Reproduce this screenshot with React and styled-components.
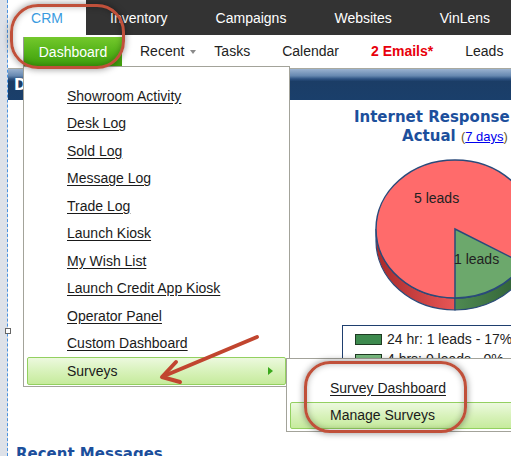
import React from 'react';
import styled, { createGlobalStyle } from 'styled-components';

const GlobalStyle = createGlobalStyle`
  html, body {
    margin: 0;
    padding: 0;
    background: #fff;
    font-family: "Liberation Sans", Arial, sans-serif;
    overflow: hidden;
  }
`;

const Page = styled.div`
  position: relative;
  display: flex;
  width: 511px;
  height: 456px;
  overflow: hidden;
  background: #fff;
`;

const LeftStrip = styled.div`
  flex: none;
  width: 7px;
  background: #dde1e8;
  border-right: 1px dashed #4b93e0;
`;

const Main = styled.div`
  flex: 1;
  min-width: 0;
  display: flex;
  flex-direction: column;
`;

const TopNav = styled.div`
  flex: none;
  display: flex;
  height: 35px;
  background: #333;
`;

const TopItem = styled.div`
  display: flex;
  align-items: center;
  justify-content: center;
  padding: ${p => (p.$active ? '0' : '0 24px')};
  width: ${p => (p.$active ? '78px' : 'auto')};
  flex: none;
  background: ${p => (p.$active ? '#fff' : 'transparent')};
  color: ${p => (p.$active ? '#3b9be0' : '#fff')};
  font-size: 14px;
  white-space: nowrap;
`;

const SubNav = styled.div`
  flex: none;
  display: flex;
  align-items: center;
  height: 31px;
  padding-left: 15px;
  background: #fff;
  white-space: nowrap;
`;

const DashButton = styled.div`
  align-self: flex-start;
  flex: none;
  display: flex;
  align-items: center;
  justify-content: center;
  box-sizing: border-box;
  width: 99px;
  height: 29px;
  margin: 2px 2px 0 0;
  border-left: 1px solid #999;
  background: linear-gradient(#74c82c, #56b41a 50%, #3f9f0c);
  color: #fff;
  font-size: 14px;
`;

const SubItem = styled.div`
  flex: none;
  display: flex;
  align-items: center;
  padding: ${p => (p.$menu ? '0 2px 0 16px' : '0 16px')};
  font-size: 14px;
  color: ${p => (p.$alert ? '#e8000b' : '#222')};
  font-weight: ${p => (p.$alert ? 'bold' : 'normal')};
`;

const Caret = styled.span`
  display: inline-block;
  margin-left: 6px;
  margin-top: 2px;
  border-left: 3.5px solid transparent;
  border-right: 3.5px solid transparent;
  border-top: 4px solid #8a8a8a;
`;

const Content = styled.div`
  flex: none;
  display: flex;
  flex-direction: column;
`;

const HeaderBar = styled.div`
  display: flex;
  align-items: center;
  height: 31px;
  margin-top: 2px;
  padding-left: 6px;
  border-top: 1px solid #a9a99f;
  background: linear-gradient(#9ab2d0 0%, #6688b0 22%, #2d5282 32%, #1b3d66 40%, #1a3f6b 100%);
  color: #fff;
  font-family: "DejaVu Sans", Verdana, sans-serif;
  font-weight: bold;
  font-size: 15px;
`;

const ChartRow = styled.div`
  display: flex;
  height: 345px;
`;

const LeftCol = styled.div`
  flex: none;
  width: 282px;
`;

const ChartCol = styled.div`
  flex: none;
  width: 330px;
  display: flex;
  flex-direction: column;
  align-items: center;
`;

const ChartTitle = styled.div`
  margin-top: 8px;
  text-align: center;
  font-family: "DejaVu Sans", Verdana, sans-serif;
  font-weight: bold;
  font-size: 15px;
  line-height: 19px;
  color: #1c4f9c;
  white-space: nowrap;
`;

const Paren = styled.span`
  font-family: "Liberation Sans", Arial, sans-serif;
  font-weight: normal;
  font-size: 13px;
  color: #6b5a2a;
`;

const DaysLink = styled.a`
  color: #0000ee;
  text-decoration: underline;
`;

const PieSvg = styled.svg`
  display: block;
  margin-top: 12px;
`;

const Legend = styled.div`
  box-sizing: border-box;
  width: 226px;
  margin-top: 11px;
  padding: 3px 0 4px 12px;
  border: 1px solid #1f3f6f;
`;

const LegendRow = styled.div`
  display: flex;
  align-items: center;
  gap: 5px;
  height: 20px;
  font-size: 14px;
  color: #222;
  white-space: nowrap;
`;

const Swatch = styled.span`
  flex: none;
  width: 25px;
  height: 9px;
  border: 1px solid #1e3b22;
  background: ${p => p.$color};
`;

const SectionTitle = styled.div`
  padding-left: 8px;
  font-family: "DejaVu Sans", Verdana, sans-serif;
  font-weight: bold;
  font-size: 15px;
  line-height: 18px;
  color: #1c4f9c;
`;

const Menu = styled.div`
  position: absolute;
  left: ${p => p.$x}px;
  top: ${p => p.$y}px;
  width: ${p => p.$w}px;
  height: ${p => p.$h}px;
  box-sizing: border-box;
  padding-top: 15px;
  border: 1px solid #a3a39a;
  background: #fff;
`;

const MenuItem = styled.div`
  display: flex;
  align-items: center;
  box-sizing: border-box;
  height: 27.5px;
  font-size: 14px;
  color: #1a1a1a;
  white-space: nowrap;
  padding-left: ${p => (p.$hot ? '39px' : '43px')};
  margin: ${p => (p.$hot ? '0 3px' : '0')};
  text-decoration: ${p => (p.$hot ? 'none' : 'underline')};
  text-underline-offset: 2px;
  border: ${p => (p.$hot ? '1px solid #93d060' : 'none')};
  border-radius: 2px;
  background: ${p => (p.$hot ? 'linear-gradient(#ecf9de, #d8f2bb 50%, #c6eb9c)' : 'transparent')};
`;

const SubArrow = styled.span`
  margin-left: auto;
  margin-right: 12px;
  border-top: 4px solid transparent;
  border-bottom: 4px solid transparent;
  border-left: 5px solid #3aa81c;
`;

const Ring = styled.div`
  position: absolute;
  left: ${p => p.$x}px;
  top: ${p => p.$y}px;
  width: ${p => p.$w}px;
  height: ${p => p.$h}px;
  box-sizing: border-box;
  border: 3px solid #c0503a;
  border-radius: ${p => p.$r}px;
  box-shadow: 0 0 6px 1px rgba(0, 0, 0, 0.35), inset 0 0 6px rgba(0, 0, 0, 0.3);
  pointer-events: none;
`;

const Overlay = styled.svg`
  position: absolute;
  left: 0;
  top: 0;
  pointer-events: none;
`;

const Handle = styled.div`
  position: absolute;
  left: 5px;
  top: 328px;
  width: 4px;
  height: 4px;
  border: 1px solid #666;
  background: #fff;
`;

const menuItems = [
  'Showroom Activity',
  'Desk Log',
  'Sold Log',
  'Message Log',
  'Trade Log',
  'Launch Kiosk',
  'My Wish List',
  'Launch Credit App Kiosk',
  'Operator Panel',
  'Custom Dashboard',
];

const legend = [
  { color: '#3d8a4e', label: '24 hr: 1 leads - 17%' },
  { color: '#79bb80', label: '4 hrs: 0 leads - 0%' },
  { color: '#b6dcb0', label: '1 hr: 0 leads - 0%' },
  { color: '#ff6b6b', label: 'Over 24 hr: 5 leads - 83%' },
];

// pie geometry (top face ellipse + visible side)
const cx = 85, cy = 71, rx = 79, ry = 69, depth = 12;
const pt = deg => {
  const a = (deg * Math.PI) / 180;
  return [+(cx + rx * Math.sin(a)).toFixed(2), +(cy - ry * Math.cos(a)).toFixed(2)];
};
const side = (a1, a2) => {
  const [x1, y1] = pt(a1);
  const [x2, y2] = pt(a2);
  return `M${x1},${y1} A${rx},${ry} 0 0 1 ${x2},${y2} L${x2},${y2 + depth} A${rx},${ry} 0 0 0 ${x1},${y1 + depth} Z`;
};

function Pie() {
  const [gx, gy] = pt(120);
  const [bx, by] = pt(180);
  return (
    <PieSvg width="170" height="156" viewBox="0 0 170 156">
      <defs>
        <linearGradient id="redSide" x1="0" x2="1">
          <stop offset="0" stopColor="#a82a2a" />
          <stop offset="1" stopColor="#e85656" />
        </linearGradient>
        <linearGradient id="greenSide" x1="0" x2="1">
          <stop offset="0" stopColor="#4f8a52" />
          <stop offset="1" stopColor="#2f5f34" />
        </linearGradient>
      </defs>
      <path d={side(180, 270)} fill="url(#redSide)" stroke="#2a4a7a" strokeWidth="1.2" />
      <path d={side(120, 180)} fill="url(#greenSide)" stroke="#2a4a7a" strokeWidth="1.2" />
      <path d={side(90, 120)} fill="#c84444" stroke="#2a4a7a" strokeWidth="1.2" />
      <ellipse cx={cx} cy={cy} rx={rx} ry={ry} fill="#ff6b6b" stroke="#2a4a7a" strokeWidth="1.5" />
      <path
        d={`M${cx},${cy} L${gx},${gy} A${rx},${ry} 0 0 1 ${bx},${by} Z`}
        fill="#6ca86c"
        stroke="#2a4a7a"
        strokeWidth="1.5"
      />
      <text x="44" y="45" fontFamily="Liberation Sans, Arial, sans-serif" fontSize="14" fill="#222">
        5 leads
      </text>
      <text x="84" y="106" fontFamily="Liberation Sans, Arial, sans-serif" fontSize="14" fill="#222">
        1 leads
      </text>
    </PieSvg>
  );
}

export default function App() {
  return (
    <>
      <GlobalStyle />
      <Page>
        <LeftStrip />
        <Main>
          <TopNav>
            <TopItem $active>CRM</TopItem>
            <TopItem>Inventory</TopItem>
            <TopItem>Campaigns</TopItem>
            <TopItem>Websites</TopItem>
            <TopItem>VinLens</TopItem>
          </TopNav>
          <SubNav>
            <DashButton>Dashboard</DashButton>
            <SubItem $menu>
              Recent
              <Caret />
            </SubItem>
            <SubItem>Tasks</SubItem>
            <SubItem>Calendar</SubItem>
            <SubItem $alert>2 Emails*</SubItem>
            <SubItem>Leads</SubItem>
          </SubNav>
          <Content>
            <HeaderBar>Dashboard</HeaderBar>
            <ChartRow>
              <LeftCol />
              <ChartCol>
                <ChartTitle>
                  Internet Response Time
                  <br />
                  Actual <Paren>(<DaysLink href="#">7 days</DaysLink>)</Paren>
                </ChartTitle>
                <Pie />
                <Legend>
                  {legend.map(l => (
                    <LegendRow key={l.label}>
                      <Swatch $color={l.color} />
                      {l.label}
                    </LegendRow>
                  ))}
                </Legend>
              </ChartCol>
            </ChartRow>
            <SectionTitle>Recent Messages</SectionTitle>
          </Content>
        </Main>

        <Menu $x={23} $y={66} $w={267} $h={321}>
          {menuItems.map(m => (
            <MenuItem key={m}>{m}</MenuItem>
          ))}
          <MenuItem $hot>
            Surveys
            <SubArrow />
          </MenuItem>
        </Menu>

        <Menu $x={286} $y={358} $w={240} $h={74}>
          <MenuItem>Survey Dashboard</MenuItem>
          <MenuItem $hot>Manage Surveys</MenuItem>
        </Menu>

        <Handle />

        <Ring $x={10} $y={4} $w={115} $h={65} $r={28} />
        <Ring $x={304} $y={361} $w={163} $h={72} $r={26} />
        <Overlay width="511" height="456">
          <g stroke="#c1452f" strokeWidth="4" strokeLinecap="round" strokeLinejoin="round" fill="none">
            <line x1="257" y1="337" x2="164" y2="376" />
            <polyline points="176,362 162,377 180,382" />
          </g>
        </Overlay>
      </Page>
    </>
  );
}
